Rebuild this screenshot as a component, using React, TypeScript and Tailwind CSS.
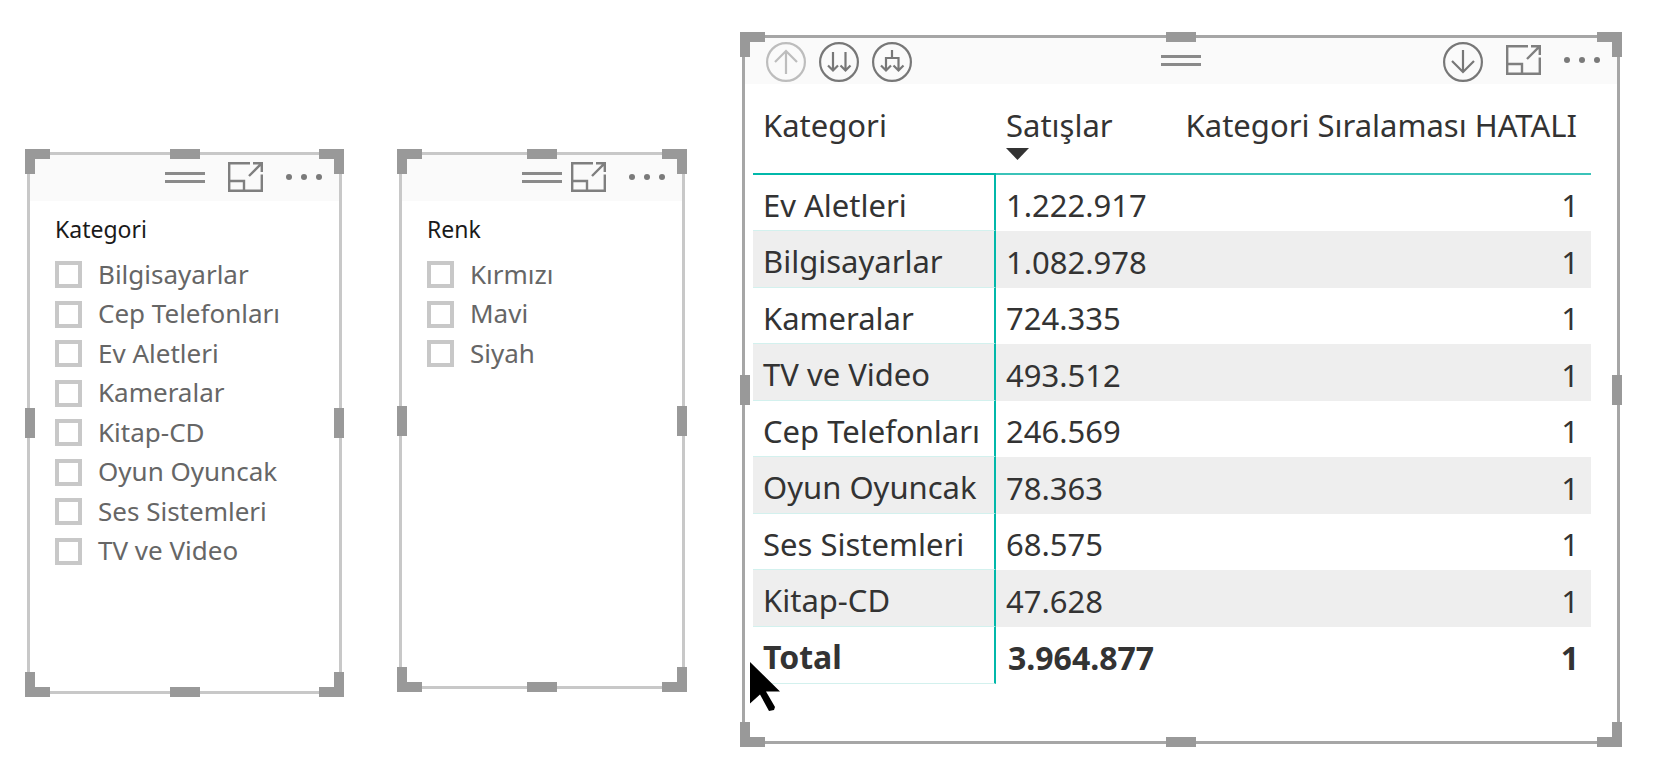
import React from 'react';
import { clsx } from 'clsx';

const CATEGORIES = [
  'Bilgisayarlar',
  'Cep Telefonları',
  'Ev Aletleri',
  'Kameralar',
  'Kitap-CD',
  'Oyun Oyuncak',
  'Ses Sistemleri',
  'TV ve Video',
];

const COLORS = ['Kırmızı', 'Mavi', 'Siyah'];

const SALES = [
  { category: 'Ev Aletleri', sales: '1.222.917', rank: 1 },
  { category: 'Bilgisayarlar', sales: '1.082.978', rank: 1 },
  { category: 'Kameralar', sales: '724.335', rank: 1 },
  { category: 'TV ve Video', sales: '493.512', rank: 1 },
  { category: 'Cep Telefonları', sales: '246.569', rank: 1 },
  { category: 'Oyun Oyuncak', sales: '78.363', rank: 1 },
  { category: 'Ses Sistemleri', sales: '68.575', rank: 1 },
  { category: 'Kitap-CD', sales: '47.628', rank: 1 },
];

const GripIcon = () => (
  <svg className="block" width="40" height="11" viewBox="0 0 40 11" fill="#8a8a8a">
    <rect width="40" height="3" />
    <rect y="8" width="40" height="3" />
  </svg>
);

const FocusIcon = () => (
  <svg className="block" width="35" height="30" viewBox="0 0 35 30" fill="none" stroke="#7f7f7f" strokeWidth="2.4">
    <path d="M22 1.2H1.2V28.8H33.8V12.5" />
    <path d="M1.2 19H16V28.8" />
    <path d="M25 1.2H33.8V10M33.8 1.2L21 14" />
  </svg>
);

const MoreIcon = () => (
  <svg className="block" width="36" height="6" viewBox="0 0 36 6" fill="#7a7a7a">
    <circle cx="3" cy="3" r="3" />
    <circle cx="18" cy="3" r="3" />
    <circle cx="33" cy="3" r="3" />
  </svg>
);

const CircleIcon = ({ d, faded = false }: { d: string; faded?: boolean }) => (
  <svg
    className="block mt-1"
    width="40"
    height="40"
    viewBox="0 0 40 40"
    fill="none"
    stroke={faded ? '#bdbdbd' : '#777777'}
    strokeWidth="2.2"
  >
    <circle cx="20" cy="20" r="18.9" />
    <path d={d} />
  </svg>
);

const IconButton = ({ label, disabled, children }: { label: string; disabled?: boolean; children: React.ReactNode }) => (
  <button type="button" aria-label={label} disabled={disabled} className="shrink-0">
    {children}
  </button>
);

/* Resize handles drawn over the selected visual's outline */
const Handles = () => (
  <div className="absolute -inset-x-[5px] -top-[6px] -bottom-[6px] pointer-events-none" aria-hidden="true">
    <span className="absolute top-0 left-0 size-[25px] border-t-10 border-l-10 border-[#999999]" />
    <span className="absolute top-0 right-0 size-[25px] border-t-10 border-r-10 border-[#999999]" />
    <span className="absolute bottom-0 left-0 size-[25px] border-b-10 border-l-10 border-[#999999]" />
    <span className="absolute bottom-0 right-0 size-[25px] border-b-10 border-r-10 border-[#999999]" />
    <span className="absolute top-0 left-1/2 -translate-x-1/2 w-[30px] h-[10px] bg-[#999999]" />
    <span className="absolute bottom-0 left-1/2 -translate-x-1/2 w-[30px] h-[10px] bg-[#999999]" />
    <span className="absolute left-0 top-1/2 -translate-y-1/2 w-[10px] h-[30px] bg-[#999999]" />
    <span className="absolute right-0 top-1/2 -translate-y-1/2 w-[10px] h-[30px] bg-[#999999]" />
  </div>
);

type VisualProps = {
  className?: string;
  left?: React.ReactNode;
  right?: React.ReactNode;
  children: React.ReactNode;
};

const Visual = ({ className, left, right, children }: VisualProps) => (
  <section className={clsx('relative border-3 bg-white', className)}>
    <header className="grid grid-cols-[1fr_auto_1fr] items-center h-[46px] pb-0.5 bg-[#fafafa]">
      <div className="flex items-center gap-[13px] pl-[21px]">{left}</div>
      <GripIcon />
      <div className="flex items-center justify-end gap-[23px] pr-[17px]">
        {right}
        <IconButton label="Odak modu">
          <FocusIcon />
        </IconButton>
        <IconButton label="Diğer seçenekler">
          <MoreIcon />
        </IconButton>
      </div>
    </header>
    {children}
    <Handles />
  </section>
);

const Slicer = ({ title, items, className }: { title: string; items: string[]; className?: string }) => (
  <Visual className={clsx('mt-[117px] border-[#c8c8c8]', className)}>
    <fieldset className="px-[25px] pt-3">
      <legend className="pt-3 text-[23px] leading-8 text-[#1a1a1a]">{title}</legend>
      <ul className="-mt-0.5">
        {items.map((item) => (
          <li key={item} className="h-[39px] even:h-10 flex items-center">
            <label className="flex items-center gap-4 text-[26px] leading-9 text-[#666666] whitespace-nowrap">
              <input type="checkbox" className="appearance-none shrink-0 size-[27px] border-4 border-[#c8c8c8] bg-white" />
              <span className="pb-0.5">{item}</span>
            </label>
          </li>
        ))}
      </ul>
    </fieldset>
  </Visual>
);

const SalesTable = () => (
  <table className="w-full border-separate border-spacing-0 text-[31px] leading-10 text-[#333333] whitespace-nowrap">
    <thead>
      <tr className="h-[91px] align-top text-left">
        <th className="w-[243px] pt-[21px] pl-[10px] font-normal border-b-2 border-[#01b8aa]">Kategori</th>
        <th className="pt-[21px] pl-[10px] font-normal border-b-2 border-[#3bc3b9]" aria-sort="descending">
          Satışlar
          <svg className="block mt-[3px]" width="23" height="12" viewBox="0 0 23 12" fill="#333333">
            <path d="M0 0H23L11.5 12Z" />
          </svg>
        </th>
        <th className="pt-[21px] pr-[14px] font-normal text-right border-b-2 border-[#3bc3b9]">
          Kategori Sıralaması HATALI
        </th>
      </tr>
    </thead>
    <tbody>
      {SALES.map((row) => (
        <tr key={row.category} className="h-14 even:h-[57px] even:bg-[#eeeeee]">
          <td className="pt-1 pl-[10px] border-r-2 border-r-[#01b8aa] border-b border-b-[#d3f1ee]">{row.category}</td>
          <td className="pt-1 pl-[10px]">{row.sales}</td>
          <td className="pt-1 pr-[12px] text-right">{row.rank}</td>
        </tr>
      ))}
    </tbody>
    <tfoot>
      <tr className="h-[57px] text-[32px] font-bold">
        <td className="pt-1 pl-[10px] border-r-2 border-r-[#01b8aa] border-b border-b-[#d3f1ee]">Total</td>
        <td className="pt-1 pl-3">3.964.877</td>
        <td className="pt-1 pr-[12px] text-right">1</td>
      </tr>
    </tfoot>
  </table>
);

const Cursor = () => (
  <svg className="absolute left-[5px] bottom-[29px] pointer-events-none" width="30" height="50" viewBox="0 0 30 50" aria-hidden="true">
    <path d="M0 0L30 29.5H16L25 45L24 48L19 49L10 32.5L0 41.5Z" fill="#000000" />
  </svg>
);

export default function App() {
  return (
    <main className="min-h-screen bg-white pt-[35px] pb-5 pl-[27px] pr-[38px] font-['Noto_Sans','Open_Sans',sans-serif]">
      <div className="grid grid-cols-[315fr_286fr_878fr] items-start gap-[57px]">
        <Slicer title="Kategori" items={CATEGORIES} className="min-h-[542px]" />
        <Slicer title="Renk" items={COLORS} className="min-h-[537px]" />
        <Visual
          className="border-[#a6a6a6] pb-[57px]"
          left={
            <>
              <IconButton label="Detaya yukarı git" disabled>
                <CircleIcon faded d="M20 32V9M9 20L20 9L31 20" />
              </IconButton>
              <IconButton label="Sonraki düzeye git">
                <CircleIcon d="M14 10V28.5M9 23.5L14 28.5L19 23.5M26.5 10V28.5M21.5 23.5L26.5 28.5L31.5 23.5" />
              </IconButton>
              <IconButton label="Bir düzey genişlet">
                <CircleIcon d="M20 8V16M14 28.5V16H26.5V28.5M9 23.5L14 28.5L19 23.5M21.5 23.5L26.5 28.5L31.5 23.5" />
              </IconButton>
            </>
          }
          right={
            <IconButton label="Detaya gitme modu">
              <CircleIcon d="M20 8V30M9 19L20 30L31 19" />
            </IconButton>
          }
        >
          <div className="pl-2 pr-[26px]">
            <SalesTable />
          </div>
          <Cursor />
        </Visual>
      </div>
    </main>
  );
}
